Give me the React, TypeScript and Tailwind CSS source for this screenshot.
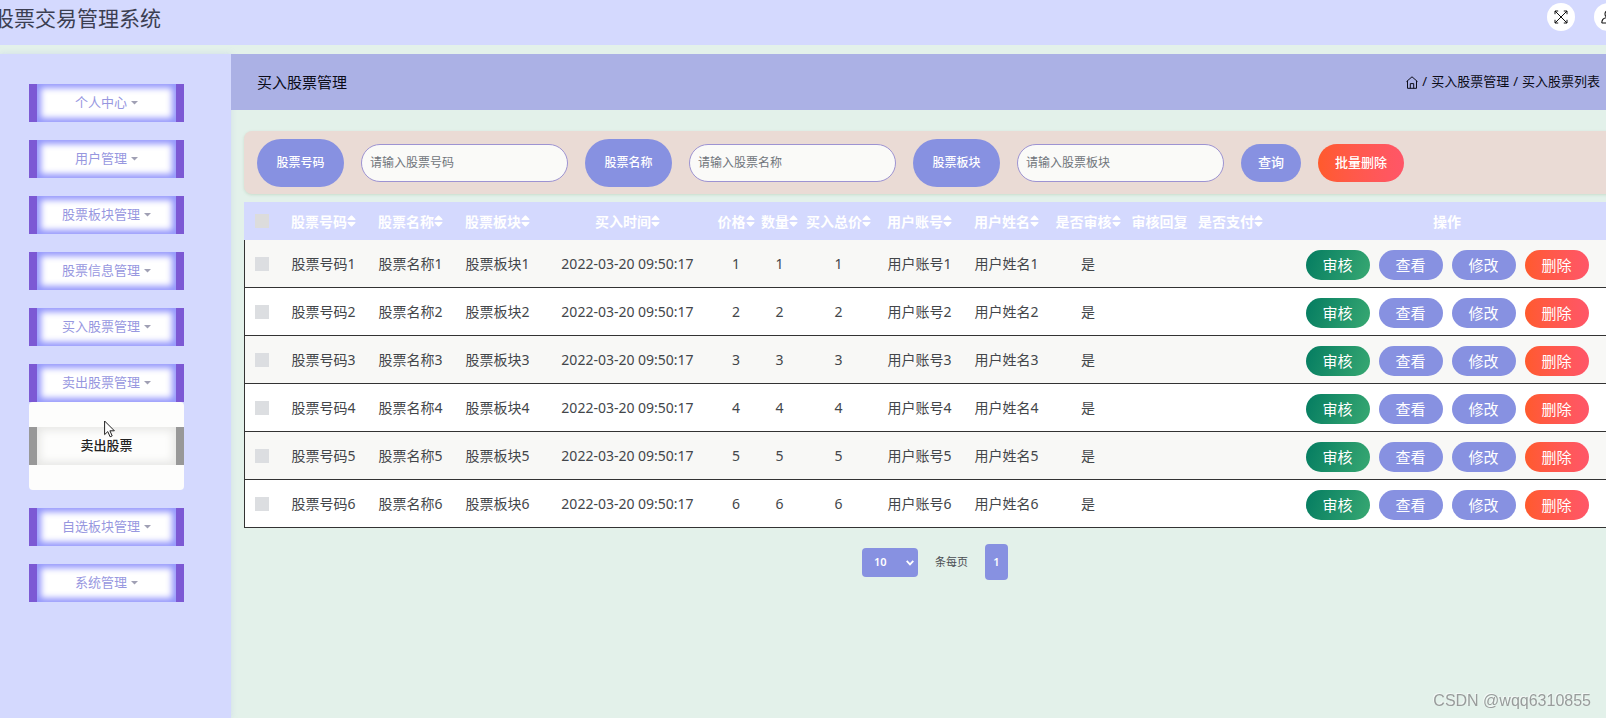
import React, { useState } from "react";
import { FaSort } from "react-icons/fa";

const menus = [
  { name: "个人中心" },
  { name: "用户管理" },
  { name: "股票板块管理" },
  { name: "股票信息管理" },
  { name: "买入股票管理" },
  { name: "卖出股票管理", children: ["卖出股票"] },
  { name: "自选板块管理" },
  { name: "系统管理" },
];

const columns = [
  { title: "股票号码", sort: true, width: "w-[87px]" },
  { title: "股票名称", sort: true, width: "w-[87px]" },
  { title: "股票板块", sort: true, width: "w-[87px]" },
  { title: "买入时间", sort: true, width: "w-[173px]" },
  { title: "价格", sort: true, width: "w-[44px]" },
  { title: "数量", sort: true, width: "w-[43px]" },
  { title: "买入总价", sort: true, width: "w-[75px]" },
  { title: "用户账号", sort: true, width: "w-[87px]" },
  { title: "用户姓名", sort: true, width: "w-[87px]" },
  { title: "是否审核", sort: true, width: "w-[76px]" },
  { title: "审核回复", sort: false, width: "w-[67px]" },
  { title: "是否支付", sort: true, width: "w-[75px]" },
];

const rows = [1, 2, 3, 4, 5, 6];

const searchFields = ["股票号码", "股票名称", "股票板块"];

const Header: React.FC = () => (
  <header className="mb-[9px] flex h-[45px] items-start justify-between bg-[#d4d9fe] pt-[3px]">
    <h1 className="-ml-[7px] text-[21px] leading-[30px] text-[#3c3f52]">
      股票交易管理系统
    </h1>
    <div className="-mr-4 flex gap-[19px]">
      <button
        aria-label="全屏"
        className="flex size-7 items-center justify-center rounded-full bg-white"
      >
        <svg
          width="14"
          height="14"
          viewBox="0 0 14 14"
          fill="none"
          stroke="#111"
          strokeWidth="1"
        >
          <path d="M1 1l12 12M13 1L1 13" />
          <path d="M1 4.2V1h3.2M9.8 1H13v3.2M13 9.8V13H9.8M4.2 13H1V9.8" />
        </svg>
      </button>
      <button
        aria-label="用户"
        className="flex size-7 items-center justify-center rounded-full bg-white"
      >
        <svg
          width="14"
          height="14"
          viewBox="0 0 14 14"
          fill="none"
          stroke="#111"
          strokeWidth="1.1"
        >
          <circle cx="7" cy="4" r="3" />
          <path d="M0.8 13c0-3 2-4.8 4.2-5.2M13.2 13c0-3-2-4.8-4.2-5.2M0.8 13h12.4" />
        </svg>
      </button>
    </div>
  </header>
);

const Sidebar: React.FC = () => (
  <aside className="w-[231px] shrink-0 bg-[#d4d9fe] pt-[30px] pl-[29px] shadow-[0_0_6px_rgba(170,185,230,0.35)]">
    <ul className="flex w-[155px] flex-col gap-[18px]">
      {menus.map((menu) => (
        <li key={menu.name}>
          <button className="flex h-[38px] w-full items-center justify-center gap-1 border-x-8 border-[#7c59d4] bg-white text-[13px] text-[#9797df] shadow-[inset_0_0_6px_4px_#9497fc]">
            {menu.name}
            <svg width="7" height="4" viewBox="0 0 7 4" fill="#a0a0b4">
              <path d="M0 0h7L3.5 3.6z" />
            </svg>
          </button>
          {menu.children && (
            <div className="relative h-[88px] rounded-[4px] bg-[#fdfdfc] pt-[25px]">
              {menu.children.map((child) => (
                <a
                  key={child}
                  href="#"
                  className="flex h-[38px] items-center justify-center border-x-8 border-[#989898] text-[13px] font-medium text-[#222] shadow-[inset_0_0_8px_3px_#e6e6e4]"
                >
                  {child}
                </a>
              ))}
              <svg
                className="absolute top-[18px] left-[75px]"
                width="11"
                height="18"
                viewBox="0 0 11 18"
                fill="#fff"
                stroke="#222"
                strokeWidth="1"
              >
                <path d="M0.6 1v13.6l3.2-3 2.3 5.2 2.1-0.9-2.3-5.1h4.5z" />
              </svg>
            </div>
          )}
        </li>
      ))}
    </ul>
  </aside>
);

const TitleBar: React.FC = () => (
  <div className="flex h-14 items-center justify-between bg-[#abb1e5] pr-[6px] pl-[26px] text-[#0c0c18]">
    <h2 className="text-[15px]">买入股票管理</h2>
    <nav className="flex items-center gap-1 text-[13px]">
      <a href="#" aria-label="首页">
        <svg
          width="12"
          height="13"
          viewBox="0 0 12 13"
          fill="none"
          stroke="currentColor"
          strokeWidth="1"
        >
          <path d="M0.5 5.6L6 0.8l5.5 4.8M1.5 5v7.3h9V5" />
          <path d="M4.3 12.3V7.6h3.4v4.7" />
        </svg>
      </a>
      <span>/</span>
      <a href="#">买入股票管理</a>
      <span>/</span>
      <span>买入股票列表</span>
    </nav>
  </div>
);

const SearchBar: React.FC = () => (
  <form className="flex h-[63px] items-center gap-[17px] rounded-[8px] bg-[#eadbd5] pl-[13px] shadow-[0_1px_3px_rgba(160,190,160,0.4)]">
    {searchFields.map((field) => (
      <div key={field} className="flex items-center gap-[17px]">
        <label
          htmlFor={field}
          className="flex h-12 w-[87px] items-center justify-center rounded-full bg-[#8791e1] text-[12px] font-medium text-white"
        >
          {field}
        </label>
        <input
          id={field}
          type="text"
          placeholder={`请输入${field}`}
          className="h-[38px] w-[207px] rounded-full border border-[#9d93d2] bg-[#fafaf8] px-2 text-[12px] placeholder:text-[#70757b]"
        />
      </div>
    ))}
    <button
      type="button"
      className="h-[38px] rounded-full bg-[#8791e1] px-[17px] text-[13px] font-medium text-white"
    >
      查询
    </button>
    <button
      type="button"
      className="h-[38px] rounded-full bg-linear-to-r from-[#ff5a2c] to-[#ff5668] px-[17px] text-[13px] font-medium text-white"
    >
      批量删除
    </button>
  </form>
);

const StockTable: React.FC = () => {
  const [checked, setChecked] = useState<number[]>([]);

  const toggle = (id: number) => {
    setChecked((prev) =>
      prev.includes(id) ? prev.filter((i) => i !== id) : [...prev, id]
    );
  };

  return (
    <table className="mt-2 w-full table-fixed border-separate border-spacing-0 text-center text-[14px] text-[#43464a]">
      <thead>
        <tr className="h-[38px] bg-[#d4d9fe] text-white">
          <th className="w-9 p-0">
            <input
              type="checkbox"
              aria-label="全选"
              checked={checked.length === rows.length}
              onChange={() =>
                setChecked(checked.length === rows.length ? [] : rows)
              }
              className="ml-[11px] block size-[14px] appearance-none bg-[#dcdcdc] checked:bg-[#8791e1]"
            />
          </th>
          {columns.map((col) => (
            <th key={col.title} className={`${col.width} p-0 font-bold`}>
              <span className="inline-flex items-center whitespace-nowrap">
                {col.title}
                {col.sort && <FaSort className="h-4 w-[9px]" />}
              </span>
            </th>
          ))}
          <th className="p-0 font-bold">操作</th>
        </tr>
      </thead>
      <tbody className="[&_td]:border-b [&_td]:border-[#333] [&_td]:p-0">
        {rows.map((n) => (
          <tr key={n} className="h-12 bg-white odd:bg-[#f8f8f6]">
            <td className="border-l">
              <input
                type="checkbox"
                aria-label={`选择股票号码${n}`}
                checked={checked.includes(n)}
                onChange={() => toggle(n)}
                className="ml-[10px] block size-[14px] appearance-none bg-[#dcdee1] checked:bg-[#8791e1]"
              />
            </td>
            <td>股票号码{n}</td>
            <td>股票名称{n}</td>
            <td>股票板块{n}</td>
            <td>2022-03-20 09:50:17</td>
            <td>{n}</td>
            <td>{n}</td>
            <td>{n}</td>
            <td>用户账号{n}</td>
            <td>用户姓名{n}</td>
            <td>是</td>
            <td></td>
            <td></td>
            <td>
              <div className="flex justify-center gap-[9px] pt-[3px] text-[15px] text-white">
                <button className="h-[30px] w-16 rounded-full bg-linear-[110deg] from-[#047c61] to-[#38a872]">
                  审核
                </button>
                <button className="h-[30px] w-16 rounded-full bg-[#8791e1]">
                  查看
                </button>
                <button className="h-[30px] w-16 rounded-full bg-[#8791e1]">
                  修改
                </button>
                <button className="h-[30px] w-16 rounded-full bg-linear-to-r from-[#ff5a2c] to-[#ff5668]">
                  删除
                </button>
              </div>
            </td>
          </tr>
        ))}
      </tbody>
    </table>
  );
};

const Pagination: React.FC = () => (
  <div className="mt-4 flex items-center justify-center gap-[17px] text-[11px] text-[#4a4d52]">
    <div className="relative">
      <select
        id="pageSize"
        defaultValue="10"
        className="block h-[29px] w-14 appearance-none rounded-[4px] bg-[#8791e1] pl-3 text-[11px] font-semibold text-white"
      >
        <option>10</option>
        <option>20</option>
        <option>50</option>
      </select>
      <svg
        className="pointer-events-none absolute top-3 right-1"
        width="8"
        height="6"
        viewBox="0 0 8 6"
        fill="none"
        stroke="#fff"
        strokeWidth="1.8"
      >
        <path d="M0.7 0.9L4 4.4l3.3-3.5" />
      </svg>
    </div>
    <label htmlFor="pageSize">条每页</label>
    <button className="h-9 w-[23px] rounded-[4px] bg-[#8791e1] font-semibold text-white">
      1
    </button>
  </div>
);

const App: React.FC = () => {
  return (
    <div className="flex min-h-screen flex-col overflow-hidden bg-[#e3f1ea] font-['Noto_Sans','Noto_Sans_CJK_SC',sans-serif]">
      <Header />
      <div className="flex grow">
        <Sidebar />
        <main className="min-w-0 grow">
          <TitleBar />
          {/* the list is a bit wider than the window */}
          <div className="-mr-5 pt-[21px] pl-[13px]">
            <SearchBar />
            <StockTable />
            <Pagination />
          </div>
        </main>
      </div>
      <div className="fixed right-[15px] bottom-[6px] font-['Liberation_Sans',sans-serif] text-[16px] leading-[22px] text-[#989c9b] [text-shadow:-1px_-1px_0_#f4f8f6]">
        CSDN @wqq6310855
      </div>
    </div>
  );
};

export default App;
